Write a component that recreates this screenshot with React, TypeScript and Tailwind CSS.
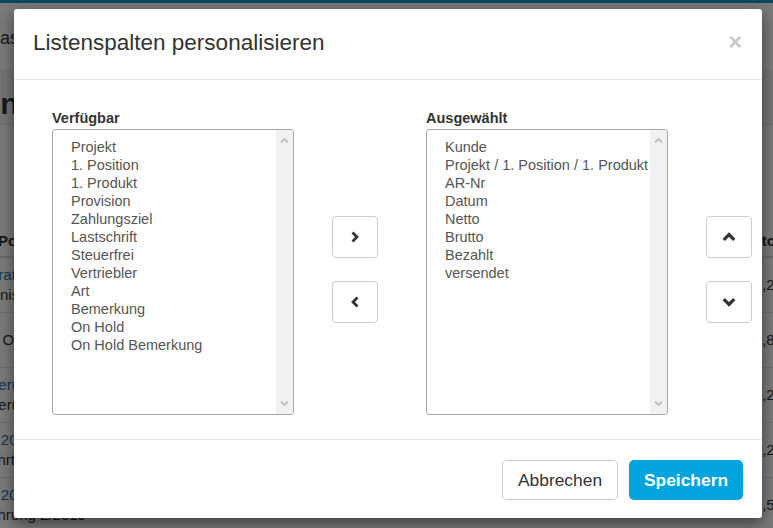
import React from 'react';

const available = [
  'Projekt',
  '1. Position',
  '1. Produkt',
  'Provision',
  'Zahlungsziel',
  'Lastschrift',
  'Steuerfrei',
  'Vertriebler',
  'Art',
  'Bemerkung',
  'On Hold',
  'On Hold Bemerkung',
];

const selected = [
  'Kunde',
  'Projekt / 1. Position / 1. Produkt',
  'AR-Nr',
  'Datum',
  'Netto',
  'Brutto',
  'Bezahlt',
  'versendet',
];

// rows of the list page behind the backdrop (only the edges are visible)
const pageRows = [
  { left: ['Beratung', 'Genis'], right: '1.234,20' },
  { left: ['', 'An OI'], right: '980,80' },
  { left: ['Aberung', 'Aberung'], right: '2.150,20' },
  { left: ['AR2019', 'Fahrt'], right: '3.420,20' },
  { left: ['AR2019', 'Fahrung 2/2019'], right: '1.020,50' },
];

function Chevron({ dir, className, width = 2.6 }: { dir: 'up' | 'down' | 'left' | 'right'; className?: string; width?: number }) {
  const points = {
    up: '1.5,8.5 6,4 10.5,8.5',
    down: '1.5,3.5 6,8 10.5,3.5',
    left: '8.5,1.5 4,6 8.5,10.5',
    right: '3.5,1.5 8,6 3.5,10.5',
  }[dir];
  return (
    <svg viewBox="0 0 12 12" className={className} fill="none">
      <polyline points={points} stroke="currentColor" strokeWidth={width} strokeLinejoin="miter" />
    </svg>
  );
}

function ListBox({ items }: { items: string[] }) {
  return (
    <div className="flex h-[286px] w-[242px] overflow-hidden rounded-[3px] border border-[#a9a9a9] bg-white">
      <div className="flex-1 overflow-hidden whitespace-nowrap pl-[18px] pt-[8px] text-[14.5px] leading-[18px] text-[#555]">
        {items.map((item) => (
          <div key={item}>{item}</div>
        ))}
      </div>
      <div className="flex w-[17px] flex-col items-center justify-between bg-[#f1f1f1] py-[6px] text-[#b4b4b4]">
        <Chevron dir="up" className="h-[9px] w-[9px]" width={2} />
        <Chevron dir="down" className="h-[9px] w-[9px]" width={2} />
      </div>
    </div>
  );
}

function MoveButton({ dir }: { dir: 'up' | 'down' | 'left' | 'right' }) {
  const size = dir === 'up' || dir === 'down' ? 'h-[14px] w-[14px]' : 'h-[12px] w-[12px]';
  return (
    <button className="flex h-[42px] w-[46px] items-center justify-center rounded-[4px] border border-[#ccc] bg-white text-[#333]">
      <Chevron dir={dir} className={size} width={2.8} />
    </button>
  );
}

export default function App() {
  return (
    <div
      className="relative h-[528px] w-[773px] overflow-hidden bg-white"
      style={{ fontFamily: '"Liberation Sans", Arial, sans-serif' }}
    >
      {/* page behind the modal */}
      <div className="h-[3px] bg-[#1a96cc]" />
      <div className="h-[68px] border-b border-[#e5e5e5] pt-[22px] text-[18px] text-[#333]">
        <span className="ml-[-101px] whitespace-nowrap">Rechnungsbasis</span>
      </div>
      <div className="h-[54px] whitespace-nowrap border-b border-[#ddd] bg-[#f5f5f5] pt-[10px] text-[30px] font-bold text-[#333]">
        <span className="ml-[-163px]">Rechnungen</span>
      </div>
      <div className="h-[106px]" />
      <div className="flex h-[27px] items-end justify-between border-b-2 border-[#ddd] pb-[4px] text-[15px] font-bold text-[#333]">
        <span className="ml-[-2px]">Pos</span>
        <span className="mr-[-3px]">Netto</span>
      </div>
      {pageRows.map((row, i) => (
        <div
          key={i}
          className="flex h-[55px] items-center justify-between whitespace-nowrap border-b border-[#ddd] text-[15px] leading-[20px]"
        >
          <div className="ml-[-20px] flex flex-col">
            <span className="text-[#2a6fb0]">{row.left[0]}</span>
            <span className="text-[#333]">{row.left[1]}</span>
          </div>
          <span className="mr-[-10px] text-[#333]">{row.right}</span>
        </div>
      ))}

      {/* backdrop */}
      <div className="absolute inset-0 bg-black/[0.52]" />

      {/* modal */}
      <div className="absolute left-[14px] top-[9px] w-[748px] rounded-[3px] bg-white shadow-[0_5px_15px_rgba(0,0,0,0.5)]">
        <div className="flex h-[71px] items-center justify-between border-b border-[#e5e5e5] pb-[3px] pl-[19px] pr-[20px]">
          <h4 className="text-[22.5px] text-[#333]">Listenspalten personalisieren</h4>
          <span className="text-[23px] font-bold leading-none text-[#c9c9c9]">×</span>
        </div>

        <div className="flex items-start pb-[24px] pl-[38px] pt-[29px]">
          <div>
            <div className="mb-[2px] h-[18px] text-[14.5px] font-bold leading-[18px] text-[#333]">Verfügbar</div>
            <ListBox items={available} />
          </div>
          <div className="ml-[38px] mt-[107px] flex flex-col gap-[23px]">
            <MoveButton dir="right" />
            <MoveButton dir="left" />
          </div>
          <div className="ml-[48px]">
            <div className="mb-[2px] h-[18px] text-[14.5px] font-bold leading-[18px] text-[#333]">Ausgewählt</div>
            <ListBox items={selected} />
          </div>
          <div className="ml-[38px] mt-[107px] flex flex-col gap-[23px]">
            <MoveButton dir="up" />
            <MoveButton dir="down" />
          </div>
        </div>

        <div className="flex justify-end gap-[11px] border-t border-[#e5e5e5] pb-[18px] pr-[19px] pt-[20px]">
          <button className="h-[40px] w-[116px] rounded-[5px] border border-[#ccc] bg-white text-[17.4px] text-[#333]">
            Abbrechen
          </button>
          <button className="h-[40px] w-[114px] rounded-[5px] bg-[#03a3e0] text-[17.4px] font-bold text-white">
            Speichern
          </button>
        </div>
      </div>
    </div>
  );
}
